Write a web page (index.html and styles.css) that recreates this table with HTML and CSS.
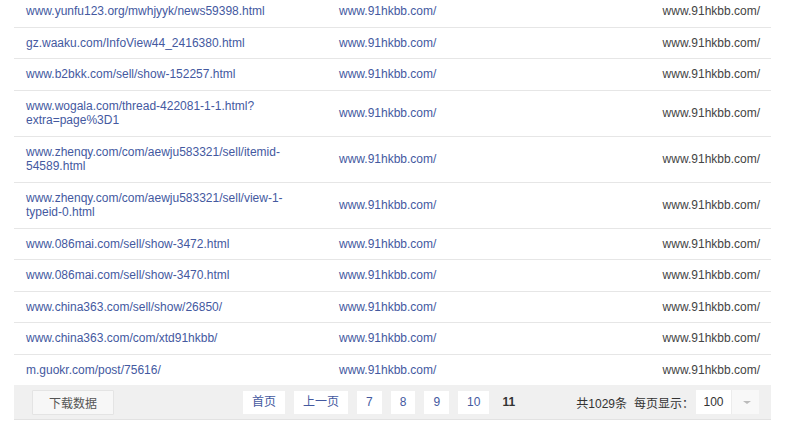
FILE: index.html
```html
<!DOCTYPE html>
<html lang="zh-CN">
<head>
    <meta charset="UTF-8">
    <title>外链列表</title>
    <link rel="stylesheet" href="styles.css">
</head>
<body>

<div class="list">
    <table class="links">
        <colgroup>
            <col class="col-src">
            <col class="col-target">
            <col class="col-site">
        </colgroup>
        <tbody>
            <tr><td><a href="#">www.yunfu123.org/mwhjyyk/news59398.html</a></td><td><a href="#">www.91hkbb.com/</a></td><td class="site">www.91hkbb.com/</td></tr>
            <tr><td><a href="#">gz.waaku.com/InfoView44_2416380.html</a></td><td><a href="#">www.91hkbb.com/</a></td><td class="site">www.91hkbb.com/</td></tr>
            <tr><td><a href="#">www.b2bkk.com/sell/show-152257.html</a></td><td><a href="#">www.91hkbb.com/</a></td><td class="site">www.91hkbb.com/</td></tr>
            <tr><td><a href="#">www.wogala.com/thread-422081-1-1.html?extra=page%3D1</a></td><td><a href="#">www.91hkbb.com/</a></td><td class="site">www.91hkbb.com/</td></tr>
            <tr><td><a href="#">www.zhenqy.com/com/aewju583321/sell/itemid-54589.html</a></td><td><a href="#">www.91hkbb.com/</a></td><td class="site">www.91hkbb.com/</td></tr>
            <tr><td><a href="#">www.zhenqy.com/com/aewju583321/sell/view-1-typeid-0.html</a></td><td><a href="#">www.91hkbb.com/</a></td><td class="site">www.91hkbb.com/</td></tr>
            <tr><td><a href="#">www.086mai.com/sell/show-3472.html</a></td><td><a href="#">www.91hkbb.com/</a></td><td class="site">www.91hkbb.com/</td></tr>
            <tr><td><a href="#">www.086mai.com/sell/show-3470.html</a></td><td><a href="#">www.91hkbb.com/</a></td><td class="site">www.91hkbb.com/</td></tr>
            <tr><td><a href="#">www.china363.com/sell/show/26850/</a></td><td><a href="#">www.91hkbb.com/</a></td><td class="site">www.91hkbb.com/</td></tr>
            <tr><td><a href="#">www.china363.com/com/xtd91hkbb/</a></td><td><a href="#">www.91hkbb.com/</a></td><td class="site">www.91hkbb.com/</td></tr>
            <tr><td><a href="#">m.guokr.com/post/75616/</a></td><td><a href="#">www.91hkbb.com/</a></td><td class="site">www.91hkbb.com/</td></tr>
        </tbody>
    </table>

    <!-- Footer: download + pager -->
    <div class="footer">
        <button class="btn-download">下载数据</button>
        <div class="pager">
            <a href="#" class="page">首页</a>
            <a href="#" class="page">上一页</a>
            <a href="#" class="page">7</a>
            <a href="#" class="page">8</a>
            <a href="#" class="page">9</a>
            <a href="#" class="page">10</a>
            <span class="page current">11</span>
        </div>
        <div class="info">
            <span>共1029条</span>
            <span class="per-label">每页显示：</span>
            <div class="per-select">
                <span class="per-value">100</span>
                <span class="per-arrow"></span>
            </div>
        </div>
    </div>
</div>

</body>
</html>
```

FILE: styles.css
```css
body {
    margin: 0;
    padding: 0 29px 0 14px;
    background-color: #fff;
    font-family: "Liberation Sans", Arial, "Noto Sans CJK SC", sans-serif;
    font-size: 12px;
    color: #333;
    overflow: hidden;
}
a {
    color: #44599f;
    text-decoration: none;
}
.list {
    width: 757px;
    margin-top: -4px;
}

/* Table */
.links {
    width: 100%;
    border-collapse: collapse;
    table-layout: fixed;
}
.col-src {
    width: 313px;
}
.col-target {
    width: 230px;
}
.links td {
    padding: 8px 12px;
    line-height: 14.5px;
    border-bottom: 1px solid #e6e6e6;
    vertical-align: middle;
    text-align: left;
}
.links td.site {
    text-align: right;
    padding-right: 11px;
    color: #444;
}
.links tr:last-child td {
    border-bottom: none;
}

/* Footer */
.footer {
    display: flex;
    align-items: center;
    height: 34px;
    padding: 0 12px 0 18px;
    background-color: #f0f0f0;
    border-bottom: 1px solid #e2e2e2;
}
.btn-download {
    width: 82px;
    height: 25px;
    padding: 0;
    font-family: inherit;
    font-size: 12px;
    color: #555;
    background-color: #f7f7f7;
    border: 1px solid #e4e4e4;
    border-radius: 1px;
}
.pager {
    display: flex;
    align-items: center;
    gap: 9px;
    margin-left: 129px;
}
.page {
    display: block;
    height: 23px;
    line-height: 23px;
    padding: 0 9px;
    background-color: #fff;
    color: #44599f;
}
.page.current {
    background: none;
    padding: 0 4px;
    color: #333;
    font-weight: bold;
}
.info {
    display: flex;
    align-items: center;
    margin-left: auto;
    color: #333;
}
.per-label {
    margin-left: 7px;
}
.per-select {
    display: flex;
    height: 24px;
    margin-left: 2px;
    background-color: #fff;
}
.per-value {
    width: 35px;
    line-height: 24px;
    text-align: center;
    color: #333;
}
.per-arrow {
    position: relative;
    width: 27px;
    background-color: #f8f8f8;
    border-left: 1px solid #ececec;
}
.per-arrow::after {
    content: "";
    position: absolute;
    left: 11px;
    top: 11px;
    border-left: 4px solid transparent;
    border-right: 4px solid transparent;
    border-top: 3px solid #bbb;
}
```
